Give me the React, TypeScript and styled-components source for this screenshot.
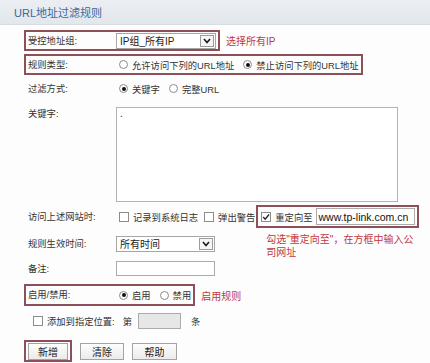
import React from 'react';
import styled, { createGlobalStyle } from 'styled-components';

const RED_LINE = '#8e5058';
const RED_TEXT = '#c1373d';

const GlobalStyle = createGlobalStyle`
  html, body {
    margin : 0;
    padding : 0;
    background : #fdfdfd;
  }
  body {
    font-family : "Liberation Sans", "Noto Sans CJK SC", sans-serif;
    font-size : 9.3px;
    color : #333;
  }
`

const S_Page = styled.div`
  width : 430px;
  height : 363px;
  overflow : hidden;
  background : #fdfdfd;
`

const S_Header = styled.div`
  height : 24px;
  display : flex;
  align-items : center;
  padding-left : 14px;
  background : linear-gradient(#ebeff3, #e2e7ec);
  border-bottom : 1px solid #d7dde3;
  color : #3b689c;
  font-size : 11px;
`

const S_Form = styled.div`
  padding-left : 24px;
`

const S_Line = styled.div<{ $mt : number; $h? : number; $pl? : number; $top? : boolean }>`
  display : flex;
  align-items : ${(p) => (p.$top ? 'flex-start' : 'center')};
  margin-top : ${(p) => p.$mt}px;
  height : ${(p) => (p.$h ? `${p.$h}px` : 'auto')};
  padding-left : ${(p) => p.$pl || 0}px;
`

// 빨간 테두리 강조 영역 (표시 안 할 때는 투명 테두리로 자리만 유지)
const S_Frame = styled.div<{ $mark? : boolean; $h? : number; $top? : boolean }>`
  position : relative;
  display : flex;
  align-items : ${(p) => (p.$top ? 'flex-start' : 'center')};
  box-sizing : border-box;
  height : ${(p) => (p.$h ? `${p.$h}px` : 'auto')};
  padding : 0 2px;
  border : 2px solid ${(p) => (p.$mark ? RED_LINE : 'transparent')};
`

const S_Label = styled.div<{ $mt? : number }>`
  width : 88px;
  line-height : 12px;
  margin-top : ${(p) => p.$mt || 0}px;
  white-space : nowrap;
`

const S_Note = styled.div`
  margin-left : 6px;
  color : ${RED_TEXT};
  font-size : 10px;
  white-space : nowrap;
`

const S_Hint = styled.div`
  position : absolute;
  left : 8px;
  top : 26px;
  color : ${RED_TEXT};
  font-size : 10px;
  line-height : 13px;
  white-space : nowrap;
`

const S_Select = styled.div<{ $w : number }>`
  display : flex;
  align-items : center;
  justify-content : space-between;
  box-sizing : border-box;
  width : ${(p) => p.$w}px;
  height : 16px;
  padding-left : 3px;
  border : 1px solid #a6a6a6;
  background : #fff;
  color : #222;
  font-size : 10px;
`

const S_Arrow = styled.div`
  display : flex;
  align-items : center;
  justify-content : center;
  box-sizing : border-box;
  width : 14px;
  height : 12px;
  margin-right : 1px;
  border : 1px solid #9c9c9c;
  background : #f6f6f6;
`

const S_Input = styled.div<{ $w : number; $h : number; $grey? : boolean }>`
  display : flex;
  align-items : center;
  box-sizing : border-box;
  width : ${(p) => p.$w}px;
  height : ${(p) => p.$h}px;
  padding-left : 2px;
  overflow : hidden;
  border : 1px solid #acacac;
  background : ${(p) => (p.$grey ? '#e7e7e7' : '#fff')};
`

const S_UrlText = styled.span`
  font-family : "Liberation Sans", Arial, sans-serif;
  font-size : 10.5px;
  color : #111;
  white-space : nowrap;
`

const S_TextArea = styled.textarea`
  box-sizing : border-box;
  width : 282px;
  height : 95px;
  margin-top : 3px;
  padding : 1px 3px;
  border : 1px solid #b3b3b3;
  background : #fff;
  resize : none;
  outline : none;
  font-family : "Liberation Sans", sans-serif;
  font-size : 10px;
  line-height : 10px;
  color : #222;
`

const S_Option = styled.div<{ $ml : number }>`
  display : flex;
  align-items : center;
  gap : 4px;
  margin-left : ${(p) => p.$ml}px;
  white-space : nowrap;
`

const S_Radio = styled.span<{ $on? : boolean }>`
  position : relative;
  box-sizing : border-box;
  width : 9px;
  height : 9px;
  border : 1px solid #8c8c8c;
  border-radius : 50%;
  background : #fff;
  &::after {
    content : '';
    display : ${(p) => (p.$on ? 'block' : 'none')};
    position : absolute;
    left : 1.5px;
    top : 1.5px;
    width : 4px;
    height : 4px;
    border-radius : 50%;
    background : #111;
  }
`

const S_Check = styled.span`
  display : flex;
  align-items : center;
  justify-content : center;
  box-sizing : border-box;
  width : 10px;
  height : 10px;
  border : 1px solid #8c8c8c;
  background : #fff;
`

const S_Text = styled.span<{ $ml? : number }>`
  margin-left : ${(p) => p.$ml || 0}px;
  white-space : nowrap;
`

const S_Button = styled.div<{ $w : number; $ml? : number }>`
  display : flex;
  align-items : center;
  justify-content : center;
  box-sizing : border-box;
  width : ${(p) => p.$w}px;
  height : 17px;
  margin-left : ${(p) => p.$ml || 0}px;
  border : 1px solid #a3a3a3;
  background : linear-gradient(#fdfdfd, #ebebeb);
  color : #222;
  font-size : 10px;
`

const Chevron = () => (
  <svg width="8" height="6" viewBox="0 0 8 6">
    <polyline points="1,1 4,4.5 7,1" fill="none" stroke="#1a1a1a" strokeWidth="1.6" />
  </svg>
)

const Tick = () => (
  <svg width="8" height="8" viewBox="0 0 8 8">
    <polyline points="1.2,4 3.2,6.2 7,1.5" fill="none" stroke="#222" strokeWidth="1.3" />
  </svg>
)

const Radio = ({ on, label, ml } : { on? : boolean; label : string; ml : number }) => (
  <S_Option $ml={ml}>
    <S_Radio $on={on} />
    <span>{label}</span>
  </S_Option>
)

const Check = ({ on, label, ml } : { on? : boolean; label : string; ml : number }) => (
  <S_Option $ml={ml}>
    <S_Check>{on && <Tick />}</S_Check>
    <span>{label}</span>
  </S_Option>
)

const App = () => {
  return (
    <S_Page>
      <GlobalStyle />
      <S_Header>URL地址过滤规则</S_Header>
      <S_Form>
        <S_Line $mt={5}>
          <S_Frame $mark $h={21}>
            <S_Label>受控地址组:</S_Label>
            <S_Select $w={100}>
              IP组_所有IP
              <S_Arrow><Chevron /></S_Arrow>
            </S_Select>
          </S_Frame>
          <S_Note>选择所有IP</S_Note>
        </S_Line>

        <S_Line $mt={3}>
          <S_Frame $mark $h={21}>
            <S_Label>规则类型:</S_Label>
            <Radio label="允许访问下列的URL地址" ml={3} />
            <Radio on label="禁止访问下列的URL地址" ml={9} />
          </S_Frame>
        </S_Line>

        <S_Line $mt={3}>
          <S_Frame $h={21}>
            <S_Label>过滤方式:</S_Label>
            <Radio on label="关键字" ml={3} />
            <Radio label="完整URL" ml={9} />
          </S_Frame>
        </S_Line>

        <S_Line $mt={3} $top>
          <S_Frame $top>
            <S_Label $mt={4}>关键字:</S_Label>
            <S_TextArea defaultValue="." readOnly />
          </S_Frame>
        </S_Line>

        <S_Line $mt={1} $h={23}>
          <S_Frame $h={23}>
            <S_Label>访问上述网站时:</S_Label>
            <Check label="记录到系统日志" ml={3} />
            <Check label="弹出警告" ml={6} />
          </S_Frame>
          <S_Frame $mark $h={23} style={{ marginLeft: -3 }}>
            <Check on label="重定向至" ml={1} />
            <S_Input $w={99} $h={17} style={{ marginLeft: 3 }}>
              <S_UrlText>www.tp-link.com.cn</S_UrlText>
            </S_Input>
            <S_Hint>
              勾选"重定向至"，在方框中输入公<br />司网址
            </S_Hint>
          </S_Frame>
        </S_Line>

        <S_Line $mt={5}>
          <S_Frame $h={21}>
            <S_Label>规则生效时间:</S_Label>
            <S_Select $w={99}>
              所有时间
              <S_Arrow><Chevron /></S_Arrow>
            </S_Select>
          </S_Frame>
        </S_Line>

        <S_Line $mt={4}>
          <S_Frame $h={21}>
            <S_Label>备注:</S_Label>
            <S_Input $w={99} $h={15} />
          </S_Frame>
        </S_Line>

        <S_Line $mt={5}>
          <S_Frame $mark $h={22}>
            <S_Label>启用/禁用:</S_Label>
            <Radio on label="启用" ml={3} />
            <Radio label="禁用" ml={9} />
          </S_Frame>
          <S_Note>启用规则</S_Note>
        </S_Line>

        <S_Line $mt={4} $h={21} $pl={9}>
          <Check label="添加到指定位置:" ml={0} />
          <S_Text $ml={8}>第</S_Text>
          <S_Input $w={43} $h={16} $grey style={{ marginLeft: 6 }} />
          <S_Text $ml={10}>条</S_Text>
        </S_Line>

        <S_Line $mt={9}>
          <S_Frame $mark $h={22}>
            <S_Button $w={40}>新增</S_Button>
          </S_Frame>
          <S_Button $w={44} $ml={8}>清除</S_Button>
          <S_Button $w={45} $ml={8}>帮助</S_Button>
        </S_Line>
      </S_Form>
    </S_Page>
  )
}

export default App;
